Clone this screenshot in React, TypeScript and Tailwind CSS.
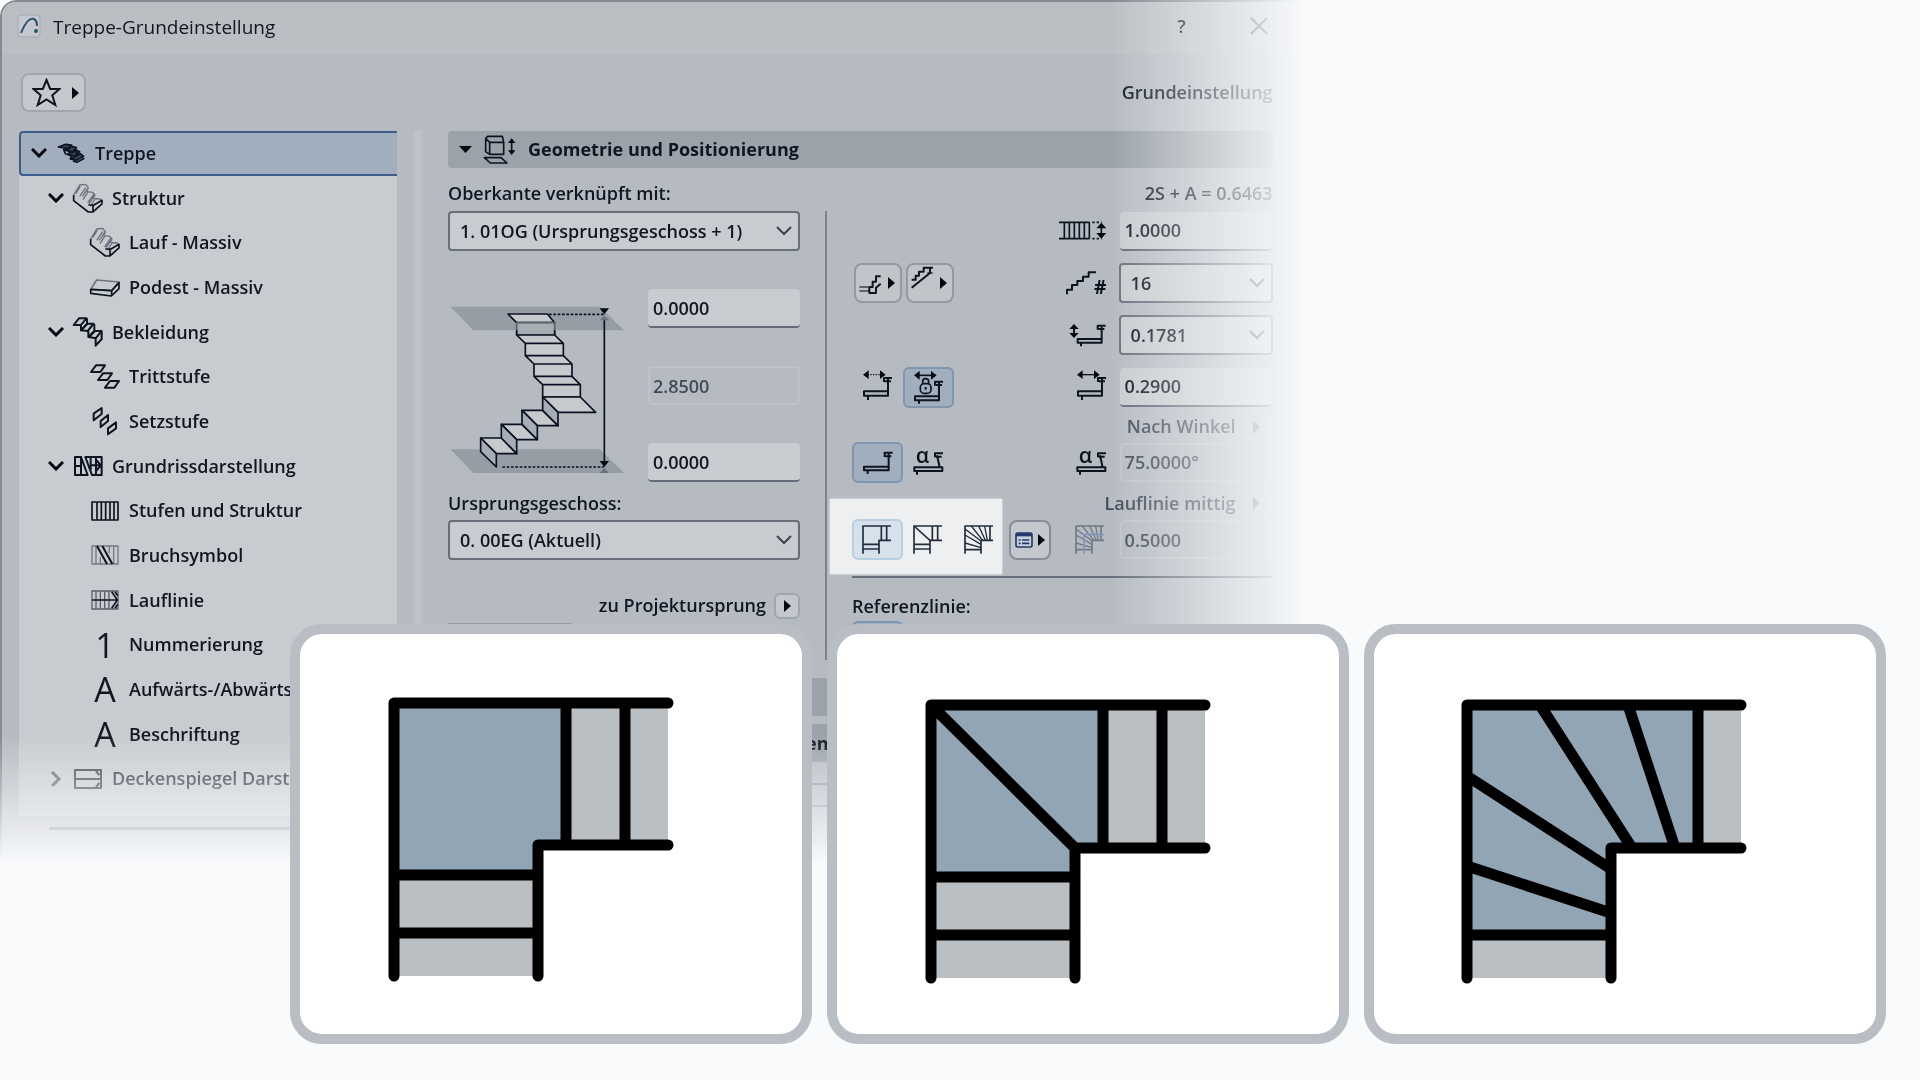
import type { ReactNode } from 'react'

const INK = '#0c1420'
const FADED = '#3c4451'

type DrawingProps = {
  box: [number, number]
  children: ReactNode
  color?: string
  width?: number
}

// Small line drawings, drawn on a grid of three units per pixel
function Drawing({ box, children, color = INK, width = 5 }: DrawingProps) {
  return (
    <svg
      aria-hidden="true"
      className="shrink-0 overflow-visible"
      width={box[0] / 3}
      height={box[1] / 3}
      viewBox={`0 0 ${box[0]} ${box[1]}`}
      fill="none"
      stroke={color}
      strokeWidth={width}
      strokeLinejoin="round"
    >
      {children}
    </svg>
  )
}

function Triangle({ faded }: { faded?: boolean }) {
  return (
    <svg aria-hidden="true" className="shrink-0" width="7" height="12" viewBox="0 0 7 12">
      <path d="M0 0l7 6-7 6z" fill={faded ? '#6b727d' : '#05080f'} />
    </svg>
  )
}

function Chevron() {
  return (
    <svg aria-hidden="true" width="16" height="10" viewBox="0 0 16 10" fill="none" stroke="#3c4350" strokeWidth="2">
      <path d="M1 1l7 7 7-7" />
    </svg>
  )
}

function StairIcon() {
  return (
    <Drawing box={[84, 62]} width={5}>
      <path d="M4 12l22-8 18 2-8 12zM20 20l24-10 14 4-10 14zM30 34l26-14 12 6-14 14zM40 48l30-16 10 8-22 12z" fill="#3a4452" />
      <path d="M20 20l6 14M44 34l-4 14M56 20l2 14M48 54l12 4 22-12" />
    </Drawing>
  )
}

function SolidFlightIcon() {
  return (
    <Drawing box={[90, 92]}>
      <path
        d="M2 36L20 6l18-2 8 10-5 12 18 2 7 8-5 10 20 2 4 4M8 32l14-22M20 40l18-26M30 50l14-22M44 60l18-26M52 70l14-22M46 14L28 40M66 36L48 62"
        stroke="#6b7380"
        strokeWidth="4"
      />
      <path d="M2 36v17l44 34h14l27-24V52l-24 14H46M60 87V68" />
    </Drawing>
  )
}

function LandingIcon() {
  return (
    <Drawing box={[90, 58]}>
      <path d="M2 34L20 6l67 6-22 26z" stroke="#6b7380" />
      <path d="M2 34v12l62 8 23-22V14L65 38 2 34M65 38v16" />
    </Drawing>
  )
}

function CladdingIcon() {
  return (
    <Drawing box={[90, 90]} width={6}>
      <path d="M2 24L18 4h22L24 24zM24 40L42 20h20L44 42zM48 60L66 42h20L68 64z" />
      <path d="M24 24v16l18-18V4M46 42v18l18-18V22M68 64v22l18-20V44" />
    </Drawing>
  )
}

function TreadsIcon() {
  return (
    <Drawing box={[90, 76]} width={6}>
      <path d="M3 24L18 4h27L31 24zM24 48l15-20h27L52 48zM45 71l15-20h27L73 71z" />
    </Drawing>
  )
}

function RisersIcon() {
  return (
    <Drawing box={[78, 86]} width={6}>
      <path d="M5 20L29 3v18L5 40zM26 42l22-18v18L26 60zM48 64l24-18v18L48 82z" />
    </Drawing>
  )
}

function PlanIcon() {
  return (
    <Drawing box={[86, 60]} width={6}>
      <path d="M3 3h18v54H3zM3 30h18M21 3l20 54H21M34 3l20 54h29V3zM50 3v40M66 3v54M48 28h35M66 10l14 18-14 18" />
    </Drawing>
  )
}

function TreadPlanIcon() {
  return (
    <Drawing box={[84, 60]} width={5}>
      <path d="M3 3h78v54H3zM18 3v54M31 3v54M44 3v54M57 3v54M69 3v54" />
    </Drawing>
  )
}

function BreakIcon() {
  return (
    <Drawing box={[84, 60]} width={4}>
      <path d="M3 3h78v54H3zM15 3v54M55 3v22M68 3v54M28 36v21" stroke="#727a85" />
      <path d="M18 3l30 54M34 3l30 54" strokeWidth="6" />
    </Drawing>
  )
}

function WalkLineIcon() {
  return (
    <Drawing box={[84, 60]} width={4}>
      <path d="M3 3h78v54H3zM15 3v54M28 3v54M41 3v54M54 3v54" stroke="#59616d" />
      <path d="M3 30h76M62 5l17 25-17 25M72 5l8 12M72 55l8-12" strokeWidth="5" />
    </Drawing>
  )
}

function CeilingIcon() {
  return (
    <Drawing box={[84, 60]} width={6} color={FADED}>
      <path d="M3 3h78v54H3zM3 30h78M66 6l10 12M66 54l10-12" />
    </Drawing>
  )
}

function LetterIcon({ children }: { children: string }) {
  return <span aria-hidden="true" className="text-[34px] leading-8 font-normal">{children}</span>
}

const tree = [
  { level: 1, label: 'Struktur', open: true, icon: <SolidFlightIcon /> },
  { level: 2, label: 'Lauf - Massiv', icon: <SolidFlightIcon /> },
  { level: 2, label: 'Podest - Massiv', icon: <LandingIcon /> },
  { level: 1, label: 'Bekleidung', open: true, icon: <CladdingIcon /> },
  { level: 2, label: 'Trittstufe', icon: <TreadsIcon /> },
  { level: 2, label: 'Setzstufe', icon: <RisersIcon /> },
  { level: 1, label: 'Grundrissdarstellung', open: true, icon: <PlanIcon /> },
  { level: 2, label: 'Stufen und Struktur', icon: <TreadPlanIcon /> },
  { level: 2, label: 'Bruchsymbol', icon: <BreakIcon /> },
  { level: 2, label: 'Lauflinie', icon: <WalkLineIcon /> },
  { level: 2, label: 'Nummerierung', icon: <LetterIcon>1</LetterIcon> },
  { level: 2, label: 'Aufwärts-/Abwärts', icon: <LetterIcon>A</LetterIcon> },
  { level: 2, label: 'Beschriftung', icon: <LetterIcon>A</LetterIcon> },
  { level: 1, label: 'Deckenspiegel Darstellung', open: false, icon: <CeilingIcon /> },
]

function Expander({ open }: { open?: boolean }) {
  return (
    <span className="flex w-4 shrink-0 justify-center">
      {open !== undefined && (
        <svg
          aria-hidden="true"
          className={open ? '' : '-rotate-90'}
          width="16"
          height="10"
          viewBox="0 0 16 10"
          fill="none"
          stroke={open ? '#05080f' : '#5d6570'}
          strokeWidth="3"
        >
          <path d="M1 1l7 7 7-7" />
        </svg>
      )}
    </span>
  )
}

function Sidebar() {
  return (
    <nav className="w-[378px] shrink-0 self-start bg-[#c8cbcf] pb-[15px]">
      <ul className="flex h-[670px] flex-col">
        <li className="flex flex-1">
          <button className="flex flex-1 items-center gap-[9px] rounded-l-sm border-2 border-r-0 border-[#3f5d8c] bg-[#a0aebe] pl-[10px]">
            <Expander open />
            <span className="flex w-[30px] justify-center"><StairIcon /></span>
            Treppe
          </button>
        </li>
        {tree.map((item) => (
          <li key={item.label} className="flex flex-1">
            <button
              className={`flex flex-1 items-center gap-[9px] whitespace-nowrap ${item.level === 1 ? 'pl-[29px]' : 'pl-[46px]'} ${item.open === false ? 'text-[#2a3340]' : ''}`}
            >
              <Expander open={item.open} />
              <span className="flex w-[30px] shrink-0 justify-center">{item.icon}</span>
              {item.label}
            </button>
          </li>
        ))}
      </ul>
    </nav>
  )
}

function SelectBox({ id, value, label }: { id: string; value: string; label?: string }) {
  return (
    <div className="relative flex-1">
      <select
        id={id}
        aria-label={label}
        className="h-10 w-full appearance-none rounded-sm border-2 border-[#69707c] bg-[#c8cbcf] pr-8 pl-[10px]"
      >
        <option>{value}</option>
      </select>
      <span className="pointer-events-none absolute top-[15px] right-2"><Chevron /></span>
    </div>
  )
}

function NumberBox({ label, value, disabled }: { label: string; value: string; disabled?: boolean }) {
  return (
    <input
      aria-label={label}
      defaultValue={value}
      disabled={disabled}
      className="h-[39px] w-[152px] rounded-sm border-b-2 border-[#646b78] bg-[#c8cbcf] px-[5px] disabled:border-2 disabled:border-[#bfc3c8] disabled:bg-transparent disabled:px-[3px] disabled:text-[#434b58]"
    />
  )
}

function ToggleButton({ label, on, light, children }: { label: string; on?: boolean; light?: boolean; children: ReactNode }) {
  const look = !on
    ? 'border-transparent'
    : light
      ? 'border-[#b7cde0] bg-[#d6e1eb]'
      : 'border-[#8096b0] bg-[#a0aebe]'
  return (
    <button
      aria-label={label}
      aria-pressed={Boolean(on)}
      className={`relative flex h-[41px] w-[51px] items-center justify-center rounded-md border-2 ${look}`}
    >
      {children}
    </button>
  )
}

const STEP = 'M3 58h72v13H3zM15 71v13M75 58V20M63 30V18h24M66 28h18'

function StepIcon({ arrow }: { arrow: 'dotted' | 'solid' }) {
  return (
    <Drawing box={[90, 88]} width={6}>
      <path d={STEP} />
      <path d="M14 8h40" strokeWidth="4" strokeDasharray={arrow === 'dotted' ? '4 4' : undefined} />
      <path d="M0 8l17-13v26zM68 8L51-5v26z" fill="#05080f" stroke="none" />
    </Drawing>
  )
}

function LockedStepIcon() {
  return (
    <Drawing box={[90, 98]} width={6}>
      <path d="M3 76h72v12H3zM15 88v10M75 76V34M63 44V32h24M66 42h18" />
      <path d="M14 13h40" strokeWidth="5" />
      <path d="M0 13L17 0v26zM68 13L51 0v26z" fill="#05080f" stroke="none" />
      <path d="M26 38v-6a9 9 0 0118 0v6" strokeWidth="5" />
      <rect x="19" y="38" width="32" height="29" rx="11" fill="#a0aebe" strokeWidth="5" />
      <path d="M35 48v8" />
    </Drawing>
  )
}

function RiseIcon() {
  return (
    <Drawing box={[112, 72]} width={6}>
      <path d="M26 48h72v11H26zM36 59v11M98 48V12M86 20V8h24M88 18h18" />
      <path d="M15 12v24" />
      <path d="M1 18L15 3l14 15zM1 30l14 15 14-15z" fill="#05080f" stroke="none" />
    </Drawing>
  )
}

function AlphaStepIcon() {
  return (
    <Drawing box={[92, 76]} width={6}>
      <path d="M4 52h84v11H4zM12 63v11M80 52l-8-36M66 22V10h24M68 20h18" />
      <text x="8" y="38" fontSize="64" fontWeight="600" fill={INK} stroke="none">α</text>
    </Drawing>
  )
}

function WidthIcon() {
  return (
    <Drawing box={[142, 58]} width={5}>
      <path d="M0 4h92M0 53h92M16 4v49M31 4v49M46 4v49M61 4v49M76 4v49M91 4v49" />
      <path d="M100 4h28M100 53h28" strokeDasharray="7 6" />
      <path d="M127 14v30" />
      <path d="M112 22l15-17 15 17zM112 36l15 17 15-17z" fill="#05080f" stroke="none" />
    </Drawing>
  )
}

function CountIcon() {
  return (
    <Drawing box={[122, 72]} width={6}>
      <path d="M3 70V56h15V42h16V30h17V17h17V4h22" />
      <text x="84" y="70" fontSize="58" fontWeight="700" fill={INK} stroke="none">#</text>
    </Drawing>
  )
}

const WALLS = 'M3 86V3h84M51 86V46h36M3 58h48M3 72h48'

function CornerIcon({ kind, faded }: { kind: 'landing' | 'split' | 'winder'; faded?: boolean }) {
  return (
    <Drawing box={[96, 88]} width={5} color={faded ? '#727984' : '#202c3c'}>
      {kind === 'winder' ? (
        <>
          <path d="M3 86V3h84M51 86V46h36M3 74h48M78 3v43" />
          <path d="M3 30l48 28M3 12l48 36M3 54l48 14M22 3l34 43M44 3l20 43M62 3l8 43" strokeWidth="4" />
        </>
      ) : (
        <path d={`${WALLS}M58 3v43M74 3v43`} />
      )}
      {kind === 'split' && <path d="M3 3l48 43" />}
      {faded && <path d="M27 86V28h60" stroke="#7f97b8" />}
    </Drawing>
  )
}

function FlyoutButton({ label, children }: { label: string; children: ReactNode }) {
  return (
    <button
      aria-label={label}
      className="flex h-10 w-12 items-center justify-between rounded-lg border-2 border-[#9299a3] bg-[#c1c5c9] pr-[5px] pl-[2px]"
    >
      {children}
      <Triangle />
    </button>
  )
}

function SmallFlyout({ label, faded }: { label: string; faded?: boolean }) {
  return (
    <button
      aria-label={label}
      disabled={faded}
      className="flex size-[26px] shrink-0 items-center justify-center rounded-md border-2 border-[#a0a6ae] bg-[#c4c8cc] disabled:border-[#bfc3c8] disabled:bg-transparent"
    >
      <Triangle faded={faded} />
    </button>
  )
}

function FieldRow({ left, icon, children }: { left?: ReactNode; icon: ReactNode; children: ReactNode }) {
  return (
    <div className="flex h-10 items-center">
      <div className="flex flex-1 items-center">{left}</div>
      <span className="flex w-[62px] justify-end pr-3">{icon}</span>
      <div className="flex w-[154px] justify-center">{children}</div>
    </div>
  )
}

function StairSketch() {
  return (
    <svg aria-hidden="true" width="175" height="168" viewBox="58 555 525 504" stroke="#0b1120" strokeWidth="5" strokeLinejoin="round">
      <path d="M60 557h448l72 71H128zM60 985h448l72 71H128z" fill="#969da5" stroke="none" />
      <g fill="#c6cacd">
        <path d="M232 579h118l22 26H258z" />
        <path d="M258 605h114v37H258z" fill="#a7adb3" stroke="#59616c" />
        <path d="M258 628v14M372 628v14" />
        <path d="M258 642h114l26 25H284zM284 667h114v37H284zM284 704h114l26 25H310zM310 729h114v37H310zM310 766h114l25 25H336zM336 791h113v37H336z" />
        <path d="M336 828h113l46 46H382zM274 868h62l46 46h-62zM212 910h62l46 46h-62zM150 951h62l46 47h-61z" />
      </g>
      <g fill="#a7adb6">
        <path d="M336 828l46 46v40l-46-46zM274 868l46 46v42l-46-46zM212 910l46 46v42l-46-47zM150 951l47 47v40l-47-46z" />
      </g>
      <path d="M355 580h165M215 1038h305" strokeDasharray="8 5" />
      <path d="M521 595v430" />
      <path d="M507 562h28l-14 18zM507 1020h28l-14 18z" fill="#05080f" stroke="none" />
      <path d="M507 598h28l-14-14zM507 1056h28l-14-14z" fill="#69717c" stroke="none" />
    </svg>
  )
}

function PositionColumn() {
  return (
    <div className="flex w-[352px] shrink-0 flex-col">
      <div className="flex"><SelectBox id="top-link" value="1. 01OG (Ursprungsgeschoss + 1)" /></div>
      <div className="mt-[38px] flex h-[193px] items-end justify-between">
        <div className="flex h-44 items-start pl-0.5"><StairSketch /></div>
        <div className="flex h-full flex-col justify-between">
          <NumberBox label="Abstand oben" value="0.0000" />
          <NumberBox label="Höhe" value="2.8500" disabled />
          <NumberBox label="Abstand unten" value="0.0000" />
        </div>
      </div>
      <label htmlFor="home-story" className="flex h-[38px] items-center pt-1">Ursprungsgeschoss:</label>
      <div className="flex"><SelectBox id="home-story" value="0. 00EG (Aktuell)" /></div>
      <div className="mt-8 flex items-center justify-end gap-2">
        zu Projektursprung
        <SmallFlyout label="Ursprung wählen" />
      </div>
      <div className="mt-1 h-6 w-[124px] bg-[#969da5]" />
    </div>
  )
}

function StepsColumn() {
  return (
    <div className="flex min-w-0 flex-1 flex-col">
      <div className="flex flex-col gap-3">
        <FieldRow icon={<WidthIcon />}><NumberBox label="Laufbreite" value="1.0000" /></FieldRow>
        <FieldRow
          icon={<CountIcon />}
          left={
            <div className="flex gap-1 pl-[2px]">
              <FlyoutButton label="Beginn">
                <Drawing box={[76, 84]} width={6}>
                  <path d="M4 54h32M4 66h32" stroke={FADED} strokeWidth="4" />
                  <path d="M34 54h10V38h10V22h14M34 54v18h20V56l14-12" />
                </Drawing>
              </FlyoutButton>
              <FlyoutButton label="Ende">
                <Drawing box={[76, 84]} width={6}>
                  <path d="M5 32h12V20h10V8h14V-4h28M5 56L60 12V-4" />
                  <path d="M52 12h16" strokeWidth="4" />
                </Drawing>
              </FlyoutButton>
            </div>
          }
        >
          <SelectBox id="count" label="Anzahl Steigungen" value="16" />
        </FieldRow>
        <FieldRow icon={<RiseIcon />}><SelectBox id="rise" label="Steigung" value="0.1781" /></FieldRow>
        <FieldRow
          icon={<StepIcon arrow="solid" />}
          left={
            <>
              <ToggleButton label="Auftritt frei"><StepIcon arrow="dotted" /></ToggleButton>
              <ToggleButton label="Auftritt fixiert" on><LockedStepIcon /></ToggleButton>
            </>
          }
        >
          <NumberBox label="Auftritt" value="0.2900" />
        </FieldRow>
      </div>
      <div className="flex h-9 items-center justify-end gap-2 pt-1 pr-[3px] text-[#434b58]">
        Nach Winkel
        <SmallFlyout label="Winkelart" faded />
      </div>
      <FieldRow
        icon={<AlphaStepIcon />}
        left={
          <>
            <ToggleButton label="Gerade Setzstufe" on>
              <Drawing box={[90, 70]} width={6}>
                <path d="M3 47h74v11H3zM14 58v11M77 47V8M65 18V5h24M67 16h18" />
              </Drawing>
            </ToggleButton>
            <ToggleButton label="Schräge Setzstufe"><AlphaStepIcon /></ToggleButton>
          </>
        }
      >
        <NumberBox label="Winkel" value="75.0000°" disabled />
      </FieldRow>
      <div className="flex h-[38px] items-center justify-end gap-2 pt-1 pr-[3px] text-[#434b58]">
        Lauflinie mittig
        <SmallFlyout label="Lage der Lauflinie" faded />
      </div>
      <FieldRow
        icon={<CornerIcon kind="winder" faded />}
        left={
          <>
            <div className="relative flex">
              <span className="absolute -top-5 right-[3px] -bottom-[14px] left-[-22px] bg-[#edeff1] shadow-[0_0_2px_#edeff1]" />
              <ToggleButton label="Podest" on light><CornerIcon kind="landing" /></ToggleButton>
              <ToggleButton label="Geteiltes Podest"><CornerIcon kind="split" /></ToggleButton>
              <ToggleButton label="Gewendelt"><CornerIcon kind="winder" /></ToggleButton>
            </div>
            <button
              aria-label="Wendelung einstellen"
              className="ml-1 flex h-10 w-[42px] items-center justify-between rounded-lg border-2 border-[#868d98] bg-[#c4c8cc] px-1"
            >
              <Drawing box={[54, 48]} width={5} color="#233a6e">
                <rect x="3" y="3" width="48" height="42" rx="5" fill="#c9d0da" />
                <path d="M3 8h48" strokeWidth="10" />
                <path d="M11 24h6M21 24h22M11 34h6M21 34h22" />
              </Drawing>
              <Triangle />
            </button>
          </>
        }
      >
        <NumberBox label="Lage" value="0.5000" disabled />
      </FieldRow>
      <hr className="mt-4 border-t-2 border-[#666e7b]" />
      <p className="mt-[14px] leading-7">Referenzlinie:</p>
      <div className="mt-px h-10 w-[51px] rounded-md border-2 border-[#8096b0] bg-[#a0aebe]" />
    </div>
  )
}

function Dialog() {
  return (
    <section className="col-start-1 row-start-1 w-[68%] self-start overflow-hidden rounded-tl-2xl border-t-2 border-l-2 border-[#838a93] bg-[#b6bbc2] [mask-composite:intersect] [mask-image:linear-gradient(to_right,#000_85%,transparent),linear-gradient(#000_735px,transparent_864px)]">
      <header className="flex h-[52px] items-center gap-3 bg-[#bbbfc3] pr-[38px] pb-1 pl-[15px]">
        <svg aria-hidden="true" width="24" height="24" viewBox="0 0 24 24" fill="none">
          <rect x="1" y="1" width="22" height="22" rx="3" fill="#c5c9cd" stroke="#a3a9b1" />
          <path d="M4 19C8 9 12 3 17 5c2 1 3 4 3 7" stroke="#28536e" strokeWidth="2" />
          <circle cx="19" cy="17" r="2" fill="#28536e" />
        </svg>
        <h1 className="flex-1 pt-0.5 text-[19px] font-medium">Treppe-Grundeinstellung</h1>
        <button aria-label="Hilfe" className="w-10">?</button>
        <button aria-label="Schließen" className="ml-9">
          <svg width="18" height="18" viewBox="0 0 18 18" stroke="#2f3744" strokeWidth="2">
            <path d="M1 1l16 16M17 1L1 17" />
          </svg>
        </button>
      </header>
      <div className="flex h-[77px] items-center justify-between pr-[33px] pl-[19px]">
        <button aria-label="Favoriten" className="flex h-[39px] w-[65px] items-center justify-between rounded-lg border-2 border-[#a0a6ae] bg-[#c4c8cc] pr-[5px] pl-[9px]">
          <svg aria-hidden="true" width="29" height="29" viewBox="0 0 29 29" fill="none" stroke={INK} strokeWidth="2">
            <path d="M14.500 2l3.700 9h9.300l-7.200 6.300 3 9.700-8.800-5.500L5.700 27l3-9.700L1.500 11h9.300z" />
          </svg>
          <Triangle />
        </button>
        <span>Grundeinstellung</span>
      </div>
      <div className="flex pr-[33px] pl-[17px]">
        <Sidebar />
        <div className="mx-4 w-[9px] shrink-0 bg-[#bec2c6]" />
        <div className="min-w-0 flex-1 pl-[10px]">
          <button className="flex h-[37px] w-full items-center gap-[11px] rounded bg-[#9ba2a9] pl-[11px] font-bold">
            <svg aria-hidden="true" width="13" height="7" viewBox="0 0 13 7"><path d="M0 0h13L6.500 7z" fill="#05080f" /></svg>
            <Drawing box={[102, 90]} width={5}>
              <path d="M20 22h42v36H20zM8 10l12 12M8 10l6-6h44l4 18M8 10v40l12 8M4 68h50l18 16H22z" />
              <path d="M86 18v36" />
              <path d="M75 24l11-14 11 14zM75 46l11 14 11-14z" fill="#05080f" stroke="none" />
            </Drawing>
            Geometrie und Positionierung
          </button>
          <div className="flex h-[43px] items-center justify-between pt-2">
            <label htmlFor="top-link">Oberkante verknüpft mit:</label>
            <span>2S + A = 0.6463</span>
          </div>
          <div className="flex h-[449px] overflow-hidden">
            <PositionColumn />
            <div className="mx-[25px] w-0.5 shrink-0 bg-[#7b818d]" />
            <StepsColumn />
          </div>
          <div className="mt-[18px] h-[38px] rounded bg-[#9ba2a9]" />
          <div className="mt-2 flex h-[38px] items-center rounded bg-[#9ba2a9] pl-[358px] font-bold">en</div>
          <div className="mt-[21px] h-6 border-y-2 border-[#8d949d]" />
          <div className="mt-8 h-9 border-t-2 border-[#a3a9b1]" />
        </div>
      </div>
      <hr className="-mt-12 ml-[47px] w-[350px] border-t-[3px] border-[#6f7788]" />
      <div className="h-20" />
    </section>
  )
}

const walls = {
  landing: {
    blue: 'M94 69h173v142h-29v30H94z',
    grey: 'M267 69h101v142H267zM94 241h144v101H94z',
    lines: 'M94 342V69h274M238 342V211h130M266 69v142M325 69v142M94 241h144M94 299h144',
  },
  split: {
    blue: 'M94 71h173v143h-29v29H94z',
    grey: 'M267 71h101v143H267zM94 243h144v101H94z',
    lines: 'M94 344V71h274M238 344V214h130M266 71v143M325 71v143M94 243h144M94 301h144M94 71l144 143',
  },
  winder: {
    blue: 'M93 71h231v143h-87v87H93z',
    grey: 'M324 71h43v143h-43zM93 301h144v43H93z',
    lines: 'M93 344V71h274M237 344V214h130M324 71v143M93 301h144M166 71l92 143M254 71l47 143M93 142l144 93M93 232l144 47',
  },
}

function VariantCard({ kind }: { kind: keyof typeof walls }) {
  const drawing = walls[kind]
  return (
    <article className="rounded-[32px] border-10 border-[#b8bec3] bg-white">
      <svg aria-hidden="true" className="h-auto w-full" viewBox="0 0 502 400">
        <path d={drawing.blue} fill="#91a5b4" />
        <path d={drawing.grey} fill="#babfc3" />
        <path d={drawing.lines} fill="none" stroke="#000" strokeWidth="11" strokeLinecap="round" strokeLinejoin="round" />
      </svg>
    </article>
  )
}

export default function App() {
  return (
    <main className="grid min-h-screen bg-[#f8fafc] font-['Open_Sans','Noto_Sans',sans-serif] text-[18px] font-semibold text-[#101722]">
      <Dialog />
      <div className="relative col-start-1 row-start-1 grid grid-cols-3 gap-[15px] self-end pr-[34px] pb-9 pl-[290px]">
        <VariantCard kind="landing" />
        <VariantCard kind="split" />
        <VariantCard kind="winder" />
      </div>
    </main>
  )
}
